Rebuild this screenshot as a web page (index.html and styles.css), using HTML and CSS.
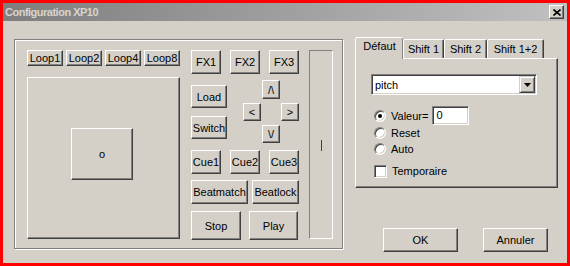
FILE: index.html
```html
<!DOCTYPE html>
<html>
  <head>
    <title>Configuration XP10</title>
    <link rel="stylesheet" href="styles.css">
  </head>
  <body>
    <div class="window">
      <div class="titlebar">
        <span class="title">Configuration XP10</span>
        <span class="close">
          <svg width="8" height="7" viewBox="0 0 8 7"><path d="M0.5 0.5 L7.5 6.5 M7.5 0.5 L0.5 6.5" stroke="#000" stroke-width="1.6"/></svg>
        </span>
      </div>

      <div class="client">
        <div class="group">
          <div class="deck">
            <div class="loops">
              <button class="btn loop">Loop1</button>
              <button class="btn loop">Loop2</button>
              <button class="btn loop">Loop4</button>
              <button class="btn loop">Loop8</button>
            </div>
            <div class="pad">
              <div class="pad-knob">o</div>
            </div>
          </div>

          <div class="controls">
            <div class="row triple">
              <button class="btn small">FX1</button>
              <button class="btn small">FX2</button>
              <button class="btn small">FX3</button>
            </div>
            <div class="row mid">
              <div class="stack">
                <button class="btn mid-btn">Load</button>
                <button class="btn mid-btn">Switch</button>
              </div>
              <div class="arrows">
                <button class="btn arrow up">/\</button>
                <button class="btn arrow left">&lt;</button>
                <button class="btn arrow right">&gt;</button>
                <button class="btn arrow down">\/</button>
              </div>
            </div>
            <div class="row triple cues">
              <button class="btn small">Cue1</button>
              <button class="btn small">Cue2</button>
              <button class="btn small">Cue3</button>
            </div>
            <div class="row beats">
              <button class="btn beatmatch">Beatmatch</button>
              <button class="btn beatlock">Beatlock</button>
            </div>
            <div class="row transport">
              <button class="btn stop">Stop</button>
              <button class="btn play">Play</button>
            </div>
          </div>

          <div class="slider">
            <div class="thumb"></div>
          </div>
        </div>

        <div class="side">
          <div class="tabs">
            <div class="tab selected">Défaut</div>
            <div class="tab t-shift1">Shift 1</div>
            <div class="tab t-shift2">Shift 2</div>
            <div class="tab t-shift12">Shift 1+2</div>
          </div>
          <div class="panel">
            <div class="combo">
              <span class="combo-text">pitch</span>
              <span class="combo-btn">
                <svg width="7" height="4" viewBox="0 0 7 4"><path d="M0 0 H7 L3.5 4 Z" fill="#000"/></svg>
              </span>
            </div>
            <div class="option value-row">
              <span class="radio checked"></span>
              <span class="label">Valeur=</span>
              <span class="field">0</span>
            </div>
            <div class="option">
              <span class="radio"></span>
              <span class="label">Reset</span>
            </div>
            <div class="option">
              <span class="radio"></span>
              <span class="label">Auto</span>
            </div>
            <div class="option check-row">
              <span class="checkbox"></span>
              <span class="label">Temporaire</span>
            </div>
          </div>
          <div class="actions">
            <button class="btn ok">OK</button>
            <button class="btn cancel">Annuler</button>
          </div>
        </div>
      </div>
    </div>
  </body>
</html>
```

FILE: styles.css
```css
/* classic win dialog */

:root {
    --face: #d4d0c8;
    --shadow: #808080;
    --dark: #404040;
    --light: #fff;
    --font: "Liberation Sans", Arial, sans-serif;
}

* {
    box-sizing: border-box;
}

html, body {
    margin: 0;
    padding: 0;
    background: #f00;
}

body {
    width: 570px;
    height: 266px;
    padding: 3px;
    font: 11px var(--font);
    color: #000;
}

.window {
    width: 564px;
    height: 260px;
    background: var(--face);
    display: flex;
    flex-direction: column;
}

.titlebar {
    height: 18px;
    display: flex;
    align-items: center;
    justify-content: space-between;
    padding: 0 3px 0 2px;
    background: linear-gradient(to right, #7e7e7e, #c0c0c0);
}

.title {
    color: #d8d4cc;
    font: bold 11px var(--font);
    letter-spacing: -0.5px;
}

.close {
    width: 15px;
    height: 14px;
    display: flex;
    align-items: center;
    justify-content: center;
    background: var(--face);
    border: 1px solid;
    border-color: var(--light) var(--dark) var(--dark) var(--light);
    box-shadow: inset -1px -1px var(--shadow);
}

.client {
    flex: 1;
    display: flex;
    align-items: flex-start;
    padding-left: 11px;
}

/* buttons */

.btn {
    margin: 0;
    padding: 0;
    background: var(--face);
    border: 1px solid;
    border-color: var(--light) var(--dark) var(--dark) var(--light);
    box-shadow: inset -1px -1px var(--shadow);
    font: 11px var(--font);
    color: #000;
    white-space: nowrap;
    overflow: hidden;
}

/* left group */

.group {
    margin-top: 18px;
    width: 329px;
    height: 210px;
    display: flex;
    align-items: flex-start;
    padding: 10px 0 0 12px;
    border: 1px solid var(--shadow);
    box-shadow: inset 1px 1px var(--light), 1px 1px var(--light);
}

.deck {
    width: 153px;
    display: flex;
    flex-direction: column;
    gap: 11px;
}

.loops {
    display: flex;
    gap: 3px;
}

.loop {
    width: 36px;
    height: 16px;
    line-height: 12px;
}

.pad {
    height: 162px;
    display: flex;
    align-items: center;
    justify-content: center;
    border: 1px solid;
    border-color: var(--light) var(--dark) var(--dark) var(--light);
    box-shadow: inset -1px -1px var(--shadow);
}

.pad-knob {
    width: 62px;
    height: 52px;
    margin: 0 3px 8px 0;
    display: flex;
    align-items: center;
    justify-content: center;
    border: 1px solid;
    border-color: var(--light) var(--dark) var(--dark) var(--light);
    box-shadow: inset -1px -1px var(--shadow);
}

.controls {
    width: 108px;
    margin-left: 11px;
    display: flex;
    flex-direction: column;
}

.row {
    display: flex;
}

.triple {
    gap: 9px;
}

.small {
    width: 30px;
    height: 24px;
}

.mid {
    margin-top: 6px;
    height: 63px;
    justify-content: space-between;
}

.stack {
    margin-top: 5px;
    display: flex;
    flex-direction: column;
    gap: 8px;
}

.mid-btn {
    width: 36px;
    height: 23px;
}

.arrows {
    width: 56px;
    display: grid;
    grid-template-columns: 18px 18px 18px;
    grid-template-rows: 19px 18px 18px;
    column-gap: 1px;
    row-gap: 4px;
}

.arrow {
    width: 18px;
}

.up { grid-column: 2; grid-row: 1; }
.left { grid-column: 1; grid-row: 2; }
.right { grid-column: 3; grid-row: 2; }
.down { grid-column: 2; grid-row: 3; }

.cues {
    margin-top: 7px;
}

.beats {
    margin-top: 6px;
    gap: 4px;
}

.beatmatch {
    width: 57px;
    height: 24px;
}

.beatlock {
    width: 47px;
    height: 24px;
}

.transport {
    margin-top: 7px;
    gap: 8px;
}

.stop {
    width: 50px;
    height: 29px;
}

.play {
    width: 49px;
    height: 29px;
}

.slider {
    width: 24px;
    height: 189px;
    margin-left: 10px;
    display: flex;
    align-items: center;
    justify-content: center;
    border: 1px solid;
    border-color: var(--shadow) var(--light) var(--light) var(--shadow);
}

.thumb {
    width: 1px;
    height: 11px;
    margin-top: 2px;
    background: var(--dark);
}

/* right side */

.side {
    width: 203px;
    margin: 16px 0 0 12px;
    display: flex;
    flex-direction: column;
}

.tabs {
    height: 21px;
    display: flex;
    align-items: flex-end;
    position: relative;
    z-index: 1;
}

.tab {
    height: 19px;
    padding-top: 3px;
    text-align: center;
    background: var(--face);
    border: 1px solid;
    border-bottom: 0;
    border-color: var(--light) var(--dark) transparent var(--light);
    box-shadow: inset -1px 0 var(--shadow);
    border-radius: 2px 2px 0 0;
}

.tab.selected {
    width: 48px;
    height: 22px;
    margin-bottom: -1px;
    padding-top: 2px;
    border-right: 0;
}

.t-shift1 { width: 41px; }
.t-shift2 { width: 43px; }
.t-shift12 { width: 57px; }

.panel {
    height: 130px;
    padding: 15px 0 0 15px;
    border: 1px solid;
    border-color: var(--light) var(--dark) var(--dark) var(--light);
    box-shadow: inset -1px -1px var(--shadow);
}

.combo {
    width: 166px;
    height: 21px;
    display: flex;
    align-items: center;
    justify-content: space-between;
    padding: 0 1px 0 1px;
    background: var(--light);
    border: 1px solid;
    border-color: var(--shadow) var(--light) var(--light) var(--shadow);
    box-shadow: inset 1px 1px var(--dark), inset -1px -1px var(--face);
}

.combo-text {
    padding-left: 2px;
}

.combo-btn {
    width: 16px;
    height: 17px;
    display: flex;
    align-items: center;
    justify-content: center;
    background: var(--face);
    border: 1px solid;
    border-color: var(--face) var(--dark) var(--dark) var(--face);
    box-shadow: inset 1px 1px var(--light), inset -1px -1px var(--shadow);
}

.option {
    height: 16px;
    display: flex;
    align-items: center;
    padding-left: 3px;
}

.value-row {
    height: 19px;
    margin-top: 11px;
}

.check-row {
    margin-top: 6px;
}

.radio {
    width: 12px;
    height: 12px;
    border-radius: 50%;
    display: flex;
    align-items: center;
    justify-content: center;
    background: var(--light);
    border: 1px solid;
    border-color: var(--shadow) var(--light) var(--light) var(--shadow);
    box-shadow: inset 1px 1px var(--dark), inset -1px -1px var(--face);
}

.radio.checked::after {
    content: "";
    width: 4px;
    height: 4px;
    border-radius: 50%;
    background: #000;
}

.checkbox {
    width: 13px;
    height: 13px;
    background: var(--light);
    border: 1px solid;
    border-color: var(--shadow) var(--light) var(--light) var(--shadow);
    box-shadow: inset 1px 1px var(--dark), inset -1px -1px var(--face);
}

.label {
    margin-left: 5px;
}

.field {
    width: 37px;
    height: 19px;
    margin-left: 4px;
    padding: 2px 0 0 3px;
    background: var(--light);
    border: 1px solid;
    border-color: var(--shadow) var(--light) var(--light) var(--shadow);
    box-shadow: inset 1px 1px var(--dark), inset -1px -1px var(--face);
}

.actions {
    margin-top: 40px;
    padding-right: 10px;
    display: flex;
    justify-content: flex-end;
    gap: 25px;
}

.ok {
    width: 75px;
    height: 24px;
}

.cancel {
    width: 65px;
    height: 24px;
}
```
